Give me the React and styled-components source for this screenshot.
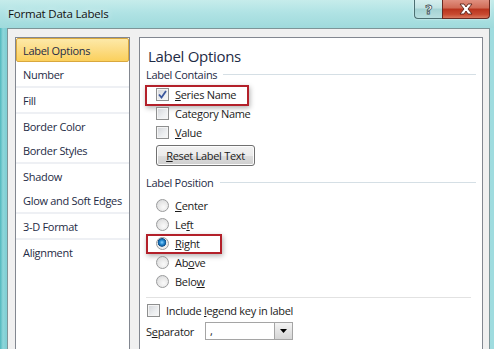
import React from "react";
import styled, { createGlobalStyle } from "styled-components";

const GlobalStyle = createGlobalStyle`
  html, body {
    margin: 0;
    padding: 0;
    overflow: hidden;
  }
  body {
    font-family: "Open Sans", "Liberation Sans", sans-serif;
    font-size: 11px;
    letter-spacing: -0.3px;
    color: #1b1b1b;
  }
`;

const categories = [
  ["Label Options", "Number"],
  ["Fill"],
  ["Border Color", "Border Styles"],
  ["Shadow", "Glow and Soft Edges"],
  ["3-D Format"],
  ["Alignment"],
];

const contains = [
  { pre: "", key: "S", post: "eries Name", checked: true, marked: true },
  { pre: "Cate", key: "g", post: "ory Name" },
  { pre: "", key: "V", post: "alue" },
];

const positions = [
  { pre: "", key: "C", post: "enter" },
  { pre: "Le", key: "f", post: "t" },
  { pre: "", key: "R", post: "ight", checked: true, marked: true },
  { pre: "Ab", key: "o", post: "ve" },
  { pre: "Belo", key: "w", post: "" },
];

function Label({ pre, k, post }) {
  return (
    <span>
      {pre}
      <u>{k}</u>
      {post}
    </span>
  );
}

function App() {
  return (
    <>
      <GlobalStyle />
      <Window>
        <TitleBar>
          <Title>Format Data Labels</Title>
          <Caption>
            <HelpBtn>?</HelpBtn>
            <CloseBtn>
              <svg width="16" height="12" viewBox="0 0 16 12">
                <path
                  d="M2 1 L6 1 L8 4 L10 1 L14 1 L10 6 L14 11 L10 11 L8 8 L6 11 L2 11 L6 6 Z"
                  fill="#fff"
                  stroke="#5a2218"
                  strokeWidth="0.9"
                />
              </svg>
            </CloseBtn>
          </Caption>
        </TitleBar>
        <Client>
          <Sidebar>
            {categories.map((group, gi) => (
              <Group key={gi}>
                {group.map((name) => (
                  <NavItem key={name} $active={name === "Label Options"}>
                    {name}
                  </NavItem>
                ))}
              </Group>
            ))}
          </Sidebar>
          <Pane>
            <Heading>Label Options</Heading>
            <GroupHeader>Label Contains</GroupHeader>
            <OptionList>
              {contains.map((c) => (
                <OptionRow key={c.post}>
                  <CheckBox $checked={c.checked}>
                    {c.checked && (
                      <svg width="9" height="9" viewBox="0 0 9 9">
                        <path
                          d="M1 4.5 L3.5 7.5 L8 1"
                          fill="none"
                          stroke="#3b579d"
                          strokeWidth="1.8"
                        />
                      </svg>
                    )}
                  </CheckBox>
                  <Label pre={c.pre} k={c.key} post={c.post} />
                  {c.marked && <Marker $w={104} $h={21} $top={0} $left={-1} />}
                </OptionRow>
              ))}
            </OptionList>
            <ResetButton>
              <u>R</u>eset Label Text
            </ResetButton>
            <GroupHeader $gap={9}>Label Position</GroupHeader>
            <RadioList>
              {positions.map((p) => (
                <OptionRow key={p.post + p.key}>
                  <Radio $checked={p.checked} />
                  <Label pre={p.pre} k={p.key} post={p.post} />
                  {p.marked && <Marker $w={76} $h={20} $top={0} $left={0} />}
                </OptionRow>
              ))}
            </RadioList>
            <Rule />
            <LegendRow>
              <CheckBox />
              <span>
                Include <u>l</u>egend key in label
              </span>
            </LegendRow>
            <SeparatorRow>
              <SepLabel>
                S<u>e</u>parator
              </SepLabel>
              <Select>
                <SelectValue>,</SelectValue>
                <SelectArrow>
                  <svg width="7" height="4" viewBox="0 0 7 4">
                    <path d="M0 0 L7 0 L3.5 4 Z" fill="#000" />
                  </svg>
                </SelectArrow>
              </Select>
            </SeparatorRow>
          </Pane>
        </Client>
      </Window>
    </>
  );
}

const Window = styled.div`
  width: 494px;
  height: 349px;
  display: flex;
  flex-direction: column;
  background: linear-gradient(90deg, #4fb7bd 0px, #8ed6da 3px, #7fcfd4 6px, #a8e0e2 20px, #b4e4e5 60%, #9fdcdf 100%);
  overflow: hidden;
`;

const TitleBar = styled.div`
  height: 28px;
  flex-shrink: 0;
  display: flex;
  justify-content: space-between;
  background: linear-gradient(180deg, #c6eceb 0%, #b0e3e4 45%, #9fdadc 100%);
`;

const Title = styled.div`
  padding: 6px 0 0 8px;
  font-size: 11.5px;
  letter-spacing: -0.2px;
  color: #111;
  text-shadow: 0 0 6px rgba(255, 255, 255, 0.9);
`;

const Caption = styled.div`
  display: flex;
  flex-shrink: 0;
  align-self: flex-start;
  margin-right: 4px;
  box-shadow: 0 0 2px rgba(255, 255, 255, 0.8);
  border-radius: 0 0 4px 4px;
`;

const CapBtn = styled.div`
  height: 18px;
  flex-shrink: 0;
  display: flex;
  align-items: center;
  justify-content: center;
  border: 1px solid #4c6f72;
  border-top: none;
`;

const HelpBtn = styled(CapBtn)`
  width: 27px;
  border-right: none;
  border-bottom-left-radius: 4px;
  background: linear-gradient(180deg, #d6eeee 0%, #c0e2e2 45%, #a4d2d3 50%, #b8dfe0 100%);
  color: #fff;
  font-family: "DejaVu Sans", sans-serif;
  font-weight: bold;
  font-size: 13px;
  -webkit-text-stroke: 0.8px #3d4f55;
`;

const CloseBtn = styled(CapBtn)`
  width: 46px;
  border-color: #6a2a22;
  border-bottom-right-radius: 4px;
  background: linear-gradient(180deg, #e09080 0%, #d06a55 45%, #b8331d 50%, #c84a30 80%, #d8785e 100%);
`;

const Client = styled.div`
  flex: 1;
  display: flex;
  gap: 9px;
  margin: 0 4px 0 7px;
  padding: 8px 6px 0 7px;
  background: #f0f0f0;
  border: 1px solid #7d9497;
  border-bottom: none;
`;

const Sidebar = styled.div`
  width: 113px;
  flex-shrink: 0;
  background: #fff;
  border: 1px solid #828790;
  border-bottom: none;
  display: flex;
  flex-direction: column;
`;

const Group = styled.div`
  display: flex;
  flex-direction: column;
  border-bottom: 2px solid #eef0f4;
  &:last-child {
    border-bottom: none;
  }
`;

const NavItem = styled.div`
  height: 24px;
  display: flex;
  align-items: center;
  padding-left: 6px;
  color: #1e2b45;
  border: 1px solid ${(p) => (p.$active ? "#d9a83e" : "transparent")};
  border-radius: 2px;
  box-sizing: border-box;
  background: ${(p) =>
    p.$active ? "linear-gradient(180deg, #fde9a8 0%, #fcdc84 50%, #fbd05c 100%)" : "transparent"};
`;

const Pane = styled.div`
  flex: 1;
  background: #fff;
  border: 1px solid #828790;
  border-bottom: none;
  padding: 7px 6px 0 6px;
  display: flex;
  flex-direction: column;
`;

const Heading = styled.div`
  height: 22px;
  padding-left: 2px;
  font-size: 15px;
  line-height: 22px;
  color: #1e2b45;
`;

const GroupHeader = styled.div`
  height: 14px;
  margin-top: ${(p) => p.$gap || 0}px;
  display: flex;
  align-items: center;
  gap: 6px;
  color: #1e2b45;
  &::after {
    content: "";
    flex: 1;
    height: 1px;
    background: #d5dfe5;
  }
`;

const OptionList = styled.div`
  padding-top: 4px;
  display: flex;
  flex-direction: column;
`;

const RadioList = styled(OptionList)`
  padding-top: 7px;
`;

const OptionRow = styled.div`
  position: relative;
  height: 19px;
  display: flex;
  align-items: center;
  gap: 6px;
  padding-left: 10px;
`;

const CheckBox = styled.span`
  width: 11px;
  height: 11px;
  flex-shrink: 0;
  display: inline-flex;
  align-items: center;
  justify-content: center;
  border: 1px solid #8e8f8f;
  box-shadow: inset 0 0 0 1px #f4f4f4;
  background: linear-gradient(135deg, #d2d4d8 0%, #eceef0 60%, #f8f8f8 100%);
`;

const Radio = styled.span`
  width: 11px;
  height: 11px;
  flex-shrink: 0;
  border-radius: 50%;
  border: 1px solid #9a9b9c;
  background: ${(p) =>
    p.$checked
      ? "radial-gradient(circle at 45% 40%, #8fd4ff 0px, #2a8fd6 2px, #0d4f8c 4px, #eaeaea 4.6px, #f6f6f6 100%)"
      : "radial-gradient(circle at 60% 65%, #fafafa 0%, #e6e6e6 55%, #cfd1d4 100%)"};
`;

const Marker = styled.span`
  position: absolute;
  top: ${(p) => p.$top}px;
  left: ${(p) => p.$left}px;
  width: ${(p) => p.$w}px;
  height: ${(p) => p.$h}px;
  box-sizing: border-box;
  border: 2px solid #b3202a;
  box-shadow: 1px 2px 5px rgba(0, 0, 0, 0.3);
  pointer-events: none;
`;

const ResetButton = styled.div`
  margin: 3px 0 0 10px;
  width: 99px;
  height: 21px;
  box-sizing: border-box;
  display: flex;
  align-items: center;
  justify-content: center;
  border: 1px solid #707070;
  border-radius: 3px;
  background: linear-gradient(180deg, #f2f2f2 0%, #ebebeb 50%, #dddddd 51%, #cfcfcf 100%);
  box-shadow: inset 0 0 0 1px #fcfcfc;
`;

const Rule = styled.div`
  height: 1px;
  margin: 6px 5px 0 0;
  background: #e2e2e2;
`;

const LegendRow = styled.div`
  height: 19px;
  margin-top: 3px;
  display: flex;
  align-items: center;
  gap: 6px;
  padding-left: 1px;
`;

const SeparatorRow = styled.div`
  margin-top: 2px;
  display: flex;
  align-items: center;
`;

const SepLabel = styled.span`
  width: 59px;
`;

const Select = styled.div`
  width: 88px;
  height: 18px;
  box-sizing: border-box;
  display: flex;
  border: 1px solid #a5a5a5;
  background: #fff;
`;

const SelectValue = styled.span`
  flex: 1;
  padding-left: 4px;
  line-height: 16px;
`;

const SelectArrow = styled.span`
  width: 17px;
  display: flex;
  align-items: center;
  justify-content: center;
  border-left: 1px solid #a5a5a5;
  background: linear-gradient(180deg, #f4f4f4 0%, #e4e4e4 50%, #d6d6d6 100%);
`;

export default App;
